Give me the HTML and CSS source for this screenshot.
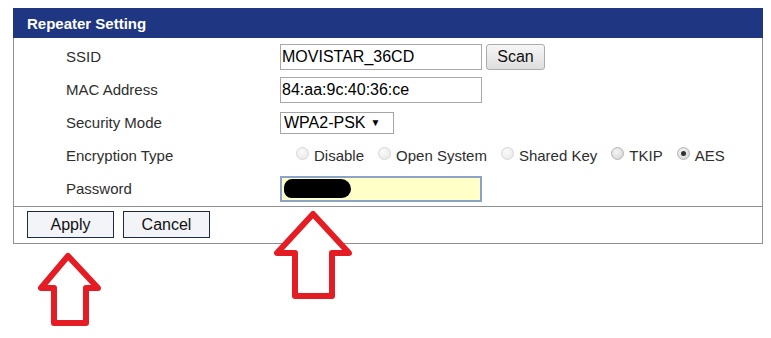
FILE: index.html
```html
<!DOCTYPE html>
<html>
  <head>
    <title>Repeater Setting</title>
    <link rel="stylesheet" href="styles.css">
  </head>

  <body>
    <div class="panel">
      <div class="panel-title">Repeater Setting</div>

      <div class="form">
        <div class="row">
          <div class="label">SSID</div>
          <div class="field">
            <input class="text" type="text" value="MOVISTAR_36CD">
            <button class="scan">Scan</button>
          </div>
        </div>
        <div class="row">
          <div class="label">MAC Address</div>
          <div class="field">
            <input class="text" type="text" value="84:aa:9c:40:36:ce">
          </div>
        </div>
        <div class="row">
          <div class="label">Security Mode</div>
          <div class="field">
            <div class="select">WPA2-PSK <span class="caret">&#9660;</span></div>
          </div>
        </div>
        <div class="row">
          <div class="label">Encryption Type</div>
          <div class="field radios">
            <label class="opt"><span class="radio disabled"></span>Disable</label>
            <label class="opt"><span class="radio disabled"></span>Open System</label>
            <label class="opt"><span class="radio disabled"></span>Shared Key</label>
            <label class="opt"><span class="radio"></span>TKIP</label>
            <label class="opt"><span class="radio checked"></span>AES</label>
          </div>
        </div>
        <div class="row">
          <div class="label">Password</div>
          <div class="field">
            <div class="text pass"><span class="blob"></span></div>
          </div>
        </div>
      </div>

      <div class="actions">
        <button class="btn">Apply</button>
        <button class="btn">Cancel</button>
      </div>
    </div>

    <!-- red arrows drawn over the screenshot -->
    <svg class="marks" width="771" height="338" viewBox="0 0 771 338">
      <polygon points="68,256 41,288 54,288 54,323 86,323 86,288 98,288" />
      <polygon points="313,214 277,253 295,253 295,296 332,296 332,253 349,253" />
    </svg>
  </body>
</html>
```

FILE: styles.css
```css
* {
  box-sizing: border-box;
}

body {
  margin: 0;
  background: #fff;
  color: #2b2b2b;
  font-family: "Liberation Sans", Arial, sans-serif;
}

.panel {
  width: 750px;
  margin: 8px 0 0 13px;
  border: 1px solid #8f8f8f;
}

.panel-title {
  height: 30px;
  margin: -1px -1px 0;
  padding-left: 14px;
  display: flex;
  align-items: center;
  background: #1f3683;
  color: #fff;
  font-size: 15px;
  font-weight: bold;
}

.form {
  padding: 2px 0 1px 52px;
}

.row {
  display: grid;
  grid-template-columns: 214px 1fr;
  align-items: center;
  height: 33px;
}

.label {
  font-size: 15px;
  color: #2e2e2e;
}

.field {
  display: flex;
  align-items: center;
  gap: 4px;
}

.text {
  width: 202px;
  height: 26px;
  padding: 0 1px;
  border: 1px solid #a9a9a9;
  font-family: inherit;
  font-size: 16px;
  color: #000;
  outline: none;
}

.scan {
  width: 59px;
  height: 26px;
  border: 1px solid #acacac;
  border-radius: 3px;
  background: linear-gradient(#f6f6f6, #dedede);
  font-family: inherit;
  font-size: 16px;
  color: #111;
}

.select {
  width: 114px;
  height: 22px;
  padding: 0 3px;
  display: flex;
  align-items: center;
  gap: 5px;
  border: 1px solid #a5a5a5;
  font-size: 16px;
  color: #000;
}

.caret {
  font-size: 10px;
}

.radios {
  gap: 0;
  padding-left: 2px;
  font-size: 15px;
  color: #2e2e2e;
}

.opt {
  display: flex;
  align-items: center;
}

.radio {
  width: 13px;
  height: 13px;
  margin: 0 5px 4px 14px;
  border: 1px solid #b4b4b4;
  border-radius: 50%;
  background: radial-gradient(circle at 40% 35%, #f4f4f4, #d2d2d2);
  display: flex;
  align-items: center;
  justify-content: center;
}

.radio.disabled {
  border-color: #d6d6d6;
  background: radial-gradient(circle at 40% 35%, #fafafa, #e6e6e6);
}

.radio.checked::after {
  content: "";
  width: 5px;
  height: 5px;
  border-radius: 50%;
  background: #333;
}

.pass {
  display: flex;
  align-items: center;
  padding-left: 2px;
  border: 2px solid #8ba3c9;
  background: #ffffc8;
}

.blob {
  width: 67px;
  height: 19px;
  border-radius: 10px 12px 11px 9px;
  background: #000;
}

.actions {
  display: flex;
  gap: 9px;
  padding: 4px 0 5px 13px;
  border-top: 1px solid #8f8f8f;
}

.btn {
  width: 87px;
  height: 27px;
  border: 1px solid #1d2a44;
  background: #f2f4f8;
  font-family: inherit;
  font-size: 16px;
  color: #111;
}

.marks {
  position: absolute;
  left: 0;
  top: 0;
  pointer-events: none;
}

.marks polygon {
  fill: #fff;
  stroke: #e41c24;
  stroke-width: 6;
  stroke-linejoin: round;
}
```
